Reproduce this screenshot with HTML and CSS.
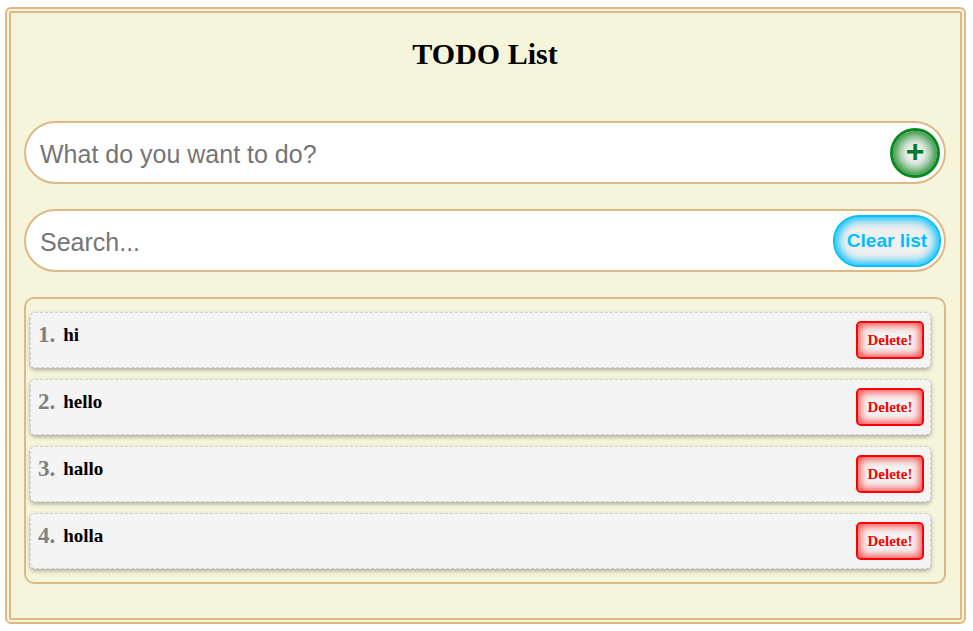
FILE: index.html
```html
<!DOCTYPE html>
<html>
<head>
<meta charset="utf-8">
<title>TODO List</title>
<link rel="stylesheet" href="styles.css">
</head>
<body>
<div class="app">
  <h1 class="title">TODO List</h1>
  <div class="pill">
    <input class="field" type="text" placeholder="What do you want to do?">
    <button class="add-btn">+</button>
  </div>
  <div class="pill">
    <input class="field" type="text" placeholder="Search...">
    <button class="clear-btn">Clear list</button>
  </div>
  <div class="list">
    <div class="item"><span class="num">1.</span><span class="text">hi</span><button class="del-btn">Delete!</button></div>
    <div class="item"><span class="num">2.</span><span class="text">hello</span><button class="del-btn">Delete!</button></div>
    <div class="item"><span class="num">3.</span><span class="text">hallo</span><button class="del-btn">Delete!</button></div>
    <div class="item"><span class="num">4.</span><span class="text">holla</span><button class="del-btn">Delete!</button></div>
  </div>
</div>
</body>
</html>
```
FILE: styles.css
```css
html, body {
  margin: 0;
  padding: 0;
  background: #ffffff;
}
body {
  padding: 7px 7px 8px 5px;
  font-family: "Liberation Serif", "Times New Roman", serif;
}
.app {
  background: #f5f5dc;
  border: 6px double #deb887;
  border-radius: 6px;
  padding: 24px 14px 34px 13px;
  display: flex;
  flex-direction: column;
}
.title {
  margin: 0 0 50px;
  font-size: 30px;
  line-height: 34px;
  text-align: center;
  font-weight: bold;
  color: #000;
}
.pill {
  display: flex;
  align-items: center;
  height: 59px;
  background: #fff;
  border: 2px solid #deb887;
  border-radius: 32px;
  margin-bottom: 25px;
  padding-right: 3px;
}
.field {
  flex: 1;
  box-sizing: border-box;
  border: none;
  outline: none;
  background: transparent;
  font-family: "Liberation Sans", Arial, sans-serif;
  font-size: 25px;
  padding: 3px 0 0 14px;
  height: 100%;
  color: #000;
  min-width: 0;
}
.field::placeholder {
  color: #757575;
}
.add-btn {
  width: 50px;
  height: 50px;
  border-radius: 50%;
  border: 3px solid #0a8a1e;
  background: #f2f2f2;
  box-shadow: inset 0 0 12px 4px #1a8a2a;
  color: #007a2a;
  font-family: "Liberation Sans", Arial, sans-serif;
  font-weight: bold;
  font-size: 32px;
  line-height: 1;
  padding: 0 0 3px;
  display: flex;
  align-items: center;
  justify-content: center;
  margin-right: 1px;
}
.clear-btn {
  width: 108px;
  height: 52px;
  border-radius: 26px;
  border: 2px solid #00bfff;
  background: #f0f0f0;
  box-shadow: inset 0 0 10px 3px #00bfff;
  color: #00bfff;
  font-family: "Liberation Sans", Arial, sans-serif;
  font-weight: bold;
  font-size: 19px;
  padding: 0;
  margin-right: 0;
}
.list {
  border: 2px solid #deb887;
  border-radius: 10px;
  padding: 13px 13px 13px 4px;
  display: flex;
  flex-direction: column;
  gap: 11px;
}
.item {
  display: flex;
  align-items: center;
  height: 54px;
  background: #f4f4f4;
  border: 1px dashed #cfcfcf;
  border-radius: 5px;
  box-shadow: 0 2px 4px rgba(0, 0, 0, 0.3);
  padding: 0 6px 0 7px;
}
.num {
  font-size: 23px;
  font-weight: bold;
  color: #808080;
  margin-right: 8px;
  position: relative;
  top: -5px;
}
.text {
  flex: 1;
  font-size: 19px;
  font-weight: bold;
  color: #000;
  position: relative;
  top: -5px;
}
.del-btn {
  width: 68px;
  height: 38px;
  border: 2px solid #ff0000;
  border-radius: 5px;
  background: #f4f4f4;
  box-shadow: inset 0 0 8px 2px #ff3b3b;
  color: #ff0000;
  font-family: "Liberation Serif", "Times New Roman", serif;
  font-weight: bold;
  font-size: 15px;
  padding: 0;
}
```
